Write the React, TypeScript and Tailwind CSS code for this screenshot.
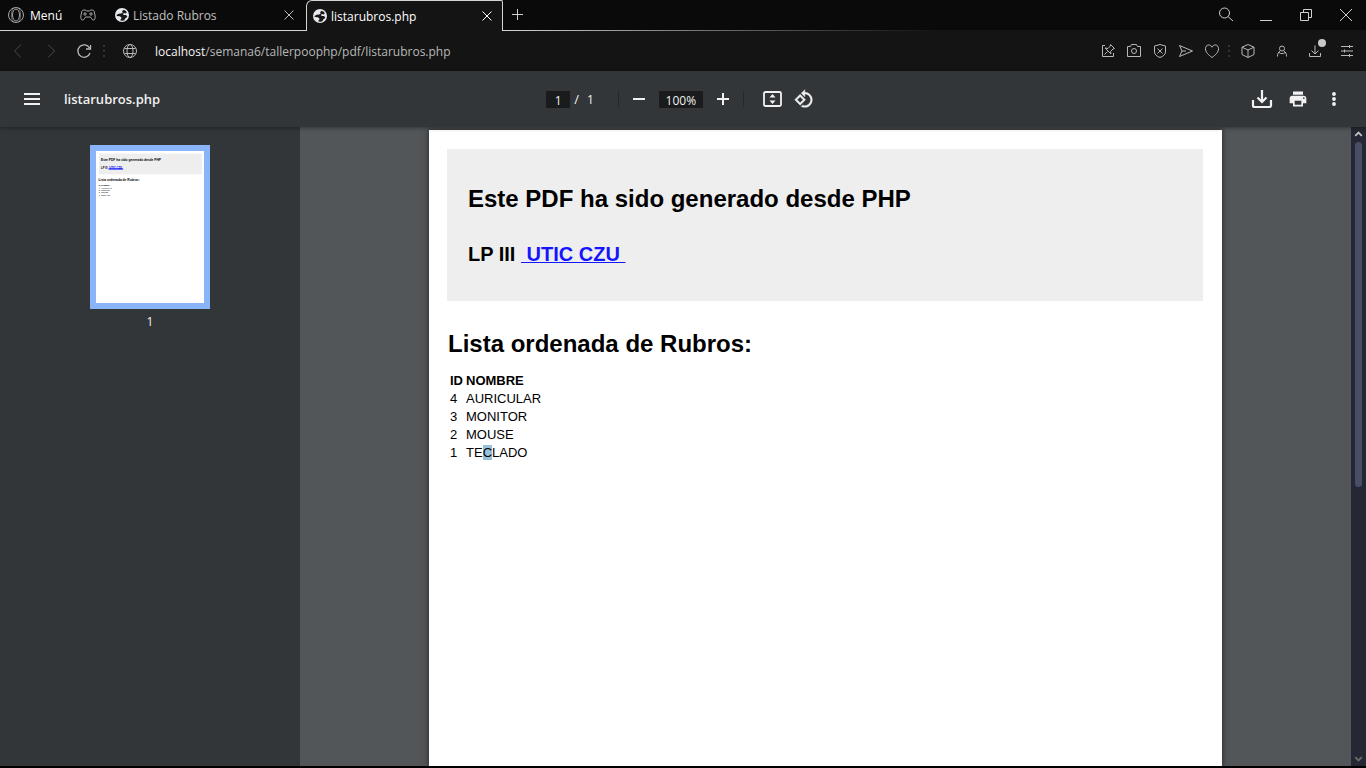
import type { ReactNode, SVGProps } from "react";

type IconProps = SVGProps<SVGSVGElement>;

function Line({ children, className, ...rest }: IconProps & { children: ReactNode }) {
  return (
    <svg viewBox="0 0 16 16" fill="none" stroke="currentColor" aria-hidden="true" className={className ?? "size-4"} {...rest}>
      {children}
    </svg>
  );
}

const OperaIcon = () => (
  <Line>
    <circle cx="8" cy="8" r="7.5" />
    <ellipse cx="8" cy="8" rx="3.5" ry="6" />
    <path d="M6 1C2.500 3.500 2.500 12.500 6 15M10 1c3.500 2.500 3.500 11.500 0 14" strokeWidth=".6" />
  </Line>
);

const GamepadIcon = () => (
  <Line>
    <path d="M4 3h1.500l1 1h3l1-1H12c1.200 0 2 .6 2.300 1.800l.8 4.200c.3 2.300-.3 4-1.600 4-1 0-1.600-.5-2-1.400l-1-1.600h-5l-1 1.600c-.4.9-1 1.400-2 1.400C1.200 13 .6 11.300.9 9l.8-4.200C2 3.600 2.800 3 4 3Z" />
    <circle cx="5" cy="7" r="1.200" />
    <circle cx="11" cy="7" r="1.200" />
  </Line>
);

const SiteIcon = () => (
  <svg viewBox="0 0 14 14" className="size-3.5 shrink-0" aria-hidden="true">
    <circle cx="7" cy="7" r="7" fill="#e8eaed" />
    <path d="M8.500 1.800 7 3.200l.8 1.200-1.600 1.200-2.600.2-2 1.200.2 1 3 .2 1.600 1.200-.2 1.600-1 .8.300.8 1.800.2 2.200-.6.600-1.800 1.600-.8.600-1.400-1.400-1.200-2.200-.1-.8-1 1.200-.8 1.800.4.800-1-.6-1.600z" fill="#17181a" />
  </svg>
);

const CloseIcon = () => (
  <Line className="size-3" viewBox="0 0 12 12">
    <path d="m1.500 1.500 9 9M10.500 1.500l-9 9" />
  </Line>
);

function IconButton({ label, className, children }: { label: string; className: string; children: ReactNode }) {
  return (
    <button type="button" aria-label={label} className={`flex shrink-0 items-center justify-center ${className}`}>
      {children}
    </button>
  );
}

function TabStrip() {
  return (
    <header className="flex h-[31px] shrink-0 bg-[#0a0a0a] text-xs">
      <div className="flex w-[306px] shrink-0 items-center border-b border-[#d5d5d5]">
        <button type="button" className="flex w-[72px] items-center gap-1.5 pl-2 text-white">
          <span className="text-[#a8a8a8]"><OperaIcon /></span>
          <span className="pt-0.5">Menú</span>
        </button>
        <IconButton label="GX Corner" className="w-8 text-[#a8a8a8]"><GamepadIcon /></IconButton>
        <div className="flex flex-1 items-center gap-1 pr-[11px] pl-[11px] text-[#c0c0c0]">
          <SiteIcon />
          <a href="#listado" className="flex-1 pt-0.5">Listado Rubros</a>
          <IconButton label="Cerrar Listado Rubros" className="size-3"><CloseIcon /></IconButton>
        </div>
      </div>
      <div className="flex w-[197px] shrink-0 items-center gap-1 rounded-tl-[6px] rounded-tr-[2px] border-x border-t border-[#d5d5d5] bg-[#141414] pr-[9px] pl-1.5 text-white">
        <SiteIcon />
        <a href="#listarubros" className="flex-1 pt-0.5">listarubros.php</a>
        <IconButton label="Cerrar listarubros.php" className="size-3"><CloseIcon /></IconButton>
      </div>
      <div className="flex min-w-0 flex-1 flex-col text-[#d0d0d0]">
        <div className="flex flex-1 items-center">
          <IconButton label="Nueva pestaña" className="ml-2 size-3.5">
            <Line className="size-3.5" viewBox="0 0 14 14"><path d="M6.500 1v11M1 6.500h11" /></Line>
          </IconButton>
          <div className="ml-auto flex">
            <IconButton label="Buscar" className="w-10">
              <Line><circle cx="6.500" cy="6" r="5" /><path d="m10.200 9.700 4.800 4.300" /></Line>
            </IconButton>
            <IconButton label="Minimizar" className="w-10">
              <Line><path d="M2 13.500h12" /></Line>
            </IconButton>
            <IconButton label="Restaurar" className="w-10">
              <Line><path d="M2.500 5.500h8v8h-8zM5.500 5.500v-3h8v8h-3" /></Line>
            </IconButton>
            <IconButton label="Cerrar" className="w-10">
              <Line><path d="m2 2 12 12M14 2 2 14" /></Line>
            </IconButton>
          </div>
        </div>
        <div className="h-px bg-linear-to-r from-[#d5d5d5] to-[#141414] to-50%" />
      </div>
    </header>
  );
}

const Dots = () => (
  <span aria-hidden="true" className="flex w-2 shrink-0 flex-col items-center gap-[3px]">
    <i className="size-0.5 bg-[#333]" /><i className="size-0.5 bg-[#333]" /><i className="size-0.5 bg-[#333]" />
  </span>
);

function AddressBar() {
  return (
    <nav className="flex h-10 shrink-0 items-center bg-[#141414] text-[#b8b8b8]">
      <IconButton label="Atrás" className="w-9 text-[#4a4a4a]"><Line><path d="m11 1.500-6.500 6.500 6.500 6.500" /></Line></IconButton>
      <IconButton label="Adelante" className="w-8 text-[#4a4a4a]"><Line><path d="m4 1.500 6.500 6.500-6.500 6.500" /></Line></IconButton>
      <IconButton label="Recargar" className="w-8">
        <Line><path d="M13.500 5A6.200 6.200 0 1 0 14 10M14.500 2v4h-4.500" strokeWidth="1.300" /></Line>
      </IconButton>
      <Dots />
      <IconButton label="Información del sitio" className="ml-1.5 w-8">
        <Line><circle cx="8" cy="8" r="6.500" /><ellipse cx="8" cy="8" rx="3" ry="6.500" /><path d="M2.500 5.500h11M2.500 10.500h11" /></Line>
      </IconButton>
      <div className="ml-[9px] min-w-0 flex-1 pt-0.5 text-xs"><span className="text-[#f4f4f4]">localhost</span>/semana6/tallerpoophp/pdf/listarubros.php</div>
      <IconButton label="Fijar" className="w-[26px]">
        <Line><path d="M5 2.500H2.500v11h11V10M10.500 1.500l4 4-1.500.5-2.500 2.500.5 2.500L5 5l3 .5L10.300 3zM7.500 8.500l-3 3" /></Line>
      </IconButton>
      <IconButton label="Captura" className="w-[26px]">
        <Line><path d="M1.500 3.500h3l1-2h5l1 2h3v10h-13z" /><circle cx="8" cy="8" r="2.500" /></Line>
      </IconButton>
      <IconButton label="Bloqueador" className="w-[26px]">
        <Line><path d="M8 1.500 13.500 3v6c0 2.500-2.500 4.500-5.500 5.500-3-1-5.500-3-5.500-5.500V3zM5.500 5.500l5 5M10.500 5.500l-5 5" /></Line>
      </IconButton>
      <IconButton label="Mi Flow" className="w-[26px]">
        <Line><path d="m1.500 2.500 13 5.500-13 5.500L4 8zM4 8h4" /></Line>
      </IconButton>
      <IconButton label="Favoritos" className="w-[26px]">
        <Line><path d="M8 14.500C4 11.500 1.500 9 1.500 5.800c0-4.600 5-5 6.500-1.600 1.500-3.400 6.500-3 6.500 1.600 0 3.200-2.500 5.700-6.500 8.700Z" /></Line>
      </IconButton>
      <Dots />
      <IconButton label="Extensiones" className="w-[30px]">
        <Line><path d="m8 1.500 6 2.700v7.300l-6 3-6-3V4.200zM2 4.200 8 7l6-2.800M8 7v7.500" /></Line>
      </IconButton>
      <IconButton label="Perfil" className="ml-px w-9">
        <Line><circle cx="8" cy="5.500" r="2.500" /><path d="M3.500 13.500c0-3 1-4.500 2.500-5.500M12.500 13.500c0-3-1-4.500-2.500-5.500M5 9.500c1.500 1.500 4.500 1.500 6 0" /></Line>
      </IconButton>
      <IconButton label="Descargas" className="relative w-[30px]">
        <Line><path d="M2.500 10v3.500h11V10M8 2.500v8M4.500 7.500 8 11l3.500-3.500" /></Line>
        <span className="absolute -top-1 right-1 size-2 rounded-full bg-[#c8c8c8]" />
      </IconButton>
      <IconButton label="Configuración rápida" className="mr-[3px] ml-px w-8">
        <Line><path d="M2 3.500h12M2 8h12M2 12.500h12M10.500 2v3M5.500 6.500v3M10.500 11v3" /></Line>
      </IconButton>
    </nav>
  );
}

function ViewerToolbar() {
  return (
    <div className="relative z-10 grid h-14 shrink-0 grid-cols-[1fr_auto_1fr] items-center bg-[#323639] text-[13px] text-[#f1f1f1] shadow-[0_1px_4px_rgba(0,0,0,0.4)]">
      <div className="flex items-center gap-5 pl-5">
        <IconButton label="Menú lateral" className="size-6">
          <svg viewBox="0 0 24 24" fill="currentColor" className="size-6"><path d="M4 6h16v2H4zM4 11h16v2H4zM4 16h16v2H4z" /></svg>
        </IconButton>
        <h1 className="pt-0.5 font-semibold">listarubros.php</h1>
      </div>
      <div className="flex items-center pr-1">
        <input aria-label="Página" defaultValue="1" className="h-[17px] w-6 bg-[#191b1c] pt-0.5 text-center text-xs font-medium" />
        <span className="ml-1 pt-0.5">/</span>
        <span className="ml-2 pt-0.5 text-xs font-medium">1</span>
        <span className="ml-6 h-4 w-px bg-[#25282a]" />
        <IconButton label="Reducir" className="ml-2 size-6">
          <Line><path d="M2 8h12" strokeWidth="2" /></Line>
        </IconButton>
        <input aria-label="Zoom" defaultValue="100%" className="ml-2 h-[17px] w-11 bg-[#191b1c] pt-0.5 text-center text-xs font-medium" />
        <IconButton label="Ampliar" className="ml-2 size-6">
          <Line><path d="M2 8h12M8 2v12" strokeWidth="2" /></Line>
        </IconButton>
        <span className="ml-2 h-4 w-px bg-[#25282a]" />
        <IconButton label="Ajustar a la página" className="ml-4 size-6">
          <svg viewBox="0 0 24 24" fill="none" stroke="currentColor" className="size-6"><rect x="4" y="5" width="17" height="14" rx="1.500" strokeWidth="1.800" /><path d="m9.500 10.500 3-3.500 3 3.500zM9.500 13.500l3 3.500 3-3.500z" fill="currentColor" stroke="none" /></svg>
        </IconButton>
        <IconButton label="Girar" className="ml-2 size-6">
          <svg viewBox="0 0 24 24" fill="currentColor" className="size-5"><path d="M7.340 6.410.86 12.900l6.490 6.480 6.490-6.480-6.500-6.490zM3.690 12.900l3.660-3.660L11 12.900l-3.660 3.660-3.650-3.660zm15.670-6.260A8.950 8.950 0 0 0 13 4V.76L8.760 5 13 9.240V6c1.790 0 3.580.68 4.950 2.050a7.007 7.007 0 0 1 0 9.900 6.973 6.973 0 0 1-7.790 1.440l-1.490 1.490C10.020 21.620 11.510 22 13 22c2.300 0 4.610-.88 6.360-2.640a8.980 8.980 0 0 0 0-12.720z" stroke="currentColor" strokeWidth=".5" /></svg>
        </IconButton>
      </div>
      <div className="flex items-center justify-end gap-3 pr-5">
        <IconButton label="Descargar" className="size-6">
          <svg viewBox="0 0 24 24" fill="none" stroke="currentColor" strokeWidth="2.200" className="size-6"><path d="M3 13v5.500q0 1.500 1.500 1.500h15q1.500 0 1.500-1.500V13M12 3v12M7.500 10.500 12 15l4.500-4.500" /></svg>
        </IconButton>
        <IconButton label="Imprimir" className="size-6">
          <svg viewBox="0 0 24 24" fill="currentColor" className="size-5"><path d="M19 8H5c-1.660 0-3 1.340-3 3v6h4v4h12v-4h4v-6c0-1.660-1.340-3-3-3zm-3 11H8v-5h8v5zm3-7c-.55 0-1-.45-1-1s.45-1 1-1 1 .45 1 1-.45 1-1 1zm-1-9H6v4h12V3z" /></svg>
        </IconButton>
        <IconButton label="Más acciones" className="size-6">
          <svg viewBox="0 0 24 24" fill="currentColor" className="size-5"><circle cx="12" cy="6" r="2.300" /><circle cx="12" cy="12" r="2.300" /><circle cx="12" cy="18" r="2.300" /></svg>
        </IconButton>
      </div>
    </div>
  );
}

const rubros = [
  { id: 4, nombre: "AURICULAR" },
  { id: 3, nombre: "MONITOR" },
  { id: 2, nombre: "MOUSE" },
  { id: 1, nombre: "TECLADO" },
];

function Thumbnail() {
  return (
    <svg viewBox="0 0 793 1116" className="block w-[108px] bg-white font-['Liberation_Sans',Arial,sans-serif]" aria-label="Miniatura de la página 1">
      <rect x="22" y="19" width="756" height="152" fill="#eee" />
      <g fontSize="24" fontWeight="700">
        <text x="37" y="77">Este PDF ha sido generado desde PHP</text>
        <text x="19" y="222">Lista ordenada de Rubros:</text>
      </g>
      <text x="37" y="134" fontSize="20" fontWeight="700">LP III</text>
      <text x="98" y="134" fontSize="20" fontWeight="700" fill="#00f">UTIC CZU</text>
      <rect x="92" y="128" width="107" height="8" fill="#00f" />
      <g fontSize="14">
        <text x="20" y="258" fontWeight="700">ID NOMBRE</text>
        {rubros.map((r, i) => (
          <g key={r.id}>
            <text x="21" y={276 + i * 18}>{r.id}</text>
            <text x="37" y={276 + i * 18}>{r.nombre}</text>
          </g>
        ))}
      </g>
    </svg>
  );
}

function Sidebar() {
  return (
    <aside className="flex w-[300px] shrink-0 flex-col items-center bg-[#323639] pt-[18px] text-xs text-[#f1f1f1]">
      <button type="button" aria-label="Página 1" className="border-6 border-[#8ab4f8]">
        <Thumbnail />
      </button>
      <span className="mt-[5px]">1</span>
    </aside>
  );
}

function PdfPage() {
  return (
    <article className="min-h-full w-[793px] bg-white pt-[19px] pr-[19px] pl-[18px] font-['Liberation_Sans',Arial,sans-serif] text-black shadow-[0_0_6px_rgba(0,0,0,0.6)]">
      <div className="h-[152px] bg-[#eee] px-[21px] pt-9 font-bold">
        <h2 className="text-2xl leading-7">Este PDF ha sido generado desde PHP</h2>
        <p className="mt-[27px] text-xl leading-7 whitespace-pre">LP III <a href="#utic" className="text-[#1414ff] underline decoration-1"> UTIC CZU </a></p>
      </div>
      <h2 className="mt-[29px] pl-px text-2xl leading-7 font-bold">Lista ordenada de Rubros:</h2>
      <table className="mt-3.5 ml-[3px] text-[13px] leading-[18px]">
        <thead>
          <tr><th className="w-4 p-0 text-left">ID</th><th className="p-0 text-left">NOMBRE</th></tr>
        </thead>
        <tbody>
          {rubros.map((r) => (
            <tr key={r.id}>
              <td className="p-0">{r.id}</td>
              <td className="p-0">
                {r.id === 1 ? <>TE<mark className="bg-[#99c1da] text-black">C</mark>LADO</> : r.nombre}
              </td>
            </tr>
          ))}
        </tbody>
      </table>
    </article>
  );
}

function Scrollbar() {
  return (
    <div aria-hidden="true" className="flex w-[15px] shrink-0 flex-col items-center bg-[#252834] text-[#c0c0c0]">
      <Line className="size-[15px]"><path d="m4.500 9.500 3.500-3.500 3.500 3.500" strokeWidth="2" /></Line>
      <div className="h-[345px] w-[7px] rounded-full bg-[#4a4d66]" />
      <Line className="mt-auto size-[15px] text-[#6a6a6a]"><path d="m4.500 6.500 3.500 3.500 3.500-3.500" strokeWidth="2" /></Line>
    </div>
  );
}

export default function App() {
  return (
    <div className="flex h-screen flex-col overflow-hidden border-b-2 border-black bg-[#525659] font-['Open_Sans','Noto_Sans',sans-serif]">
      <TabStrip />
      <AddressBar />
      <ViewerToolbar />
      <main className="flex min-h-0 flex-1">
        <Sidebar />
        <section className="flex min-w-0 flex-1 justify-center overflow-hidden pt-[3px]">
          <PdfPage />
        </section>
        <Scrollbar />
      </main>
    </div>
  );
}
